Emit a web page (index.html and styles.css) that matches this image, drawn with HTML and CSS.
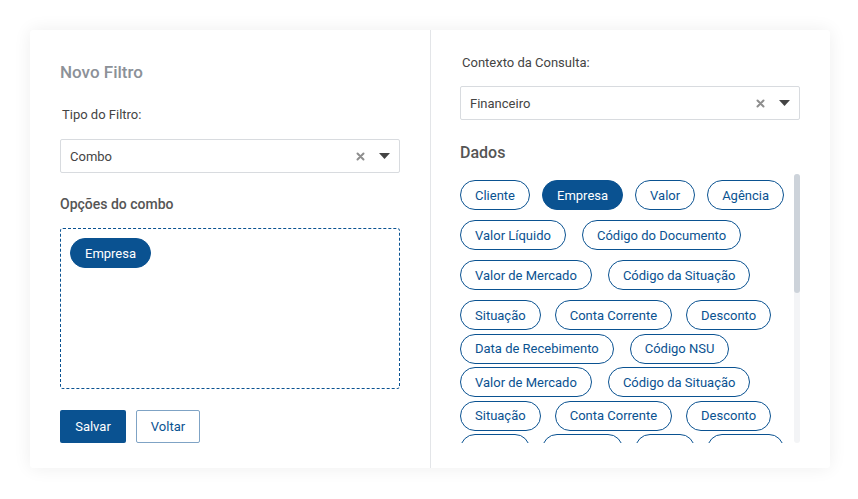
FILE: index.html
```html
<!DOCTYPE html>
<html lang="pt">
<head>
<meta charset="utf-8">
<title>Novo Filtro</title>
<link rel="stylesheet" href="styles.css">
</head>
<body>
<div class="card">
  <section class="panel left">
    <h2 class="title">Novo Filtro</h2>
    <label class="label">Tipo do Filtro:</label>
    <div class="select">
      <span class="select-value">Combo</span>
      <span class="select-icons">
        <svg class="clear" width="9" height="9" viewBox="0 0 9 9"><path d="M1.5 1.5 L7.5 7.5 M7.5 1.5 L1.5 7.5" stroke="#8e8e8e" stroke-width="2" stroke-linecap="round"/></svg>
        <svg class="caret" width="11" height="6" viewBox="0 0 11 6"><path d="M0 0 H11 L5.5 6 Z" fill="#444"/></svg>
      </span>
    </div>
    <h3 class="subtitle">Opções do combo</h3>
    <div class="dropzone">
      <span class="chip filled">Empresa</span>
    </div>
    <div class="actions">
      <button class="btn primary">Salvar</button>
      <button class="btn secondary">Voltar</button>
    </div>
  </section>
  <div class="divider"></div>
  <section class="panel right">
    <label class="label ctx">Contexto da Consulta:</label>
    <div class="select">
      <span class="select-value">Financeiro</span>
      <span class="select-icons">
        <svg class="clear" width="9" height="9" viewBox="0 0 9 9"><path d="M1.5 1.5 L7.5 7.5 M7.5 1.5 L1.5 7.5" stroke="#8e8e8e" stroke-width="2" stroke-linecap="round"/></svg>
        <svg class="caret" width="11" height="6" viewBox="0 0 11 6"><path d="M0 0 H11 L5.5 6 Z" fill="#444"/></svg>
      </span>
    </div>
    <h3 class="section">Dados</h3>
    <div class="chips-area">
      <div class="chips">
        <div class="row loose"><span class="chip">Cliente</span><span class="chip filled">Empresa</span><span class="chip">Valor</span><span class="chip">Agência</span></div>
        <div class="row loose wide"><span class="chip">Valor Líquido</span><span class="chip">Código do Documento</span></div>
        <div class="row loose wide"><span class="chip">Valor de Mercado</span><span class="chip">Código da Situação</span></div>
        <div class="row mid"><span class="chip">Situação</span><span class="chip">Conta Corrente</span><span class="chip">Desconto</span></div>
        <div class="row wide"><span class="chip">Data de Recebimento</span><span class="chip">Código NSU</span></div>
        <div class="row wide"><span class="chip">Valor de Mercado</span><span class="chip">Código da Situação</span></div>
        <div class="row mid"><span class="chip">Situação</span><span class="chip">Conta Corrente</span><span class="chip">Desconto</span></div>
        <div class="row"><span class="chip">Cliente</span><span class="chip">Empresa</span><span class="chip">Valor</span><span class="chip">Agência</span></div>
      </div>
      <div class="scrollbar"><div class="thumb"></div></div>
    </div>
  </section>
</div>
</body>
</html>
```

FILE: styles.css
```css
* { box-sizing: border-box; }
html, body { margin: 0; padding: 0; background: #ffffff; }
body {
  font-family: Roboto, "Noto Sans", Arial, sans-serif;
  color: #444;
  width: 858px;
  height: 499px;
  overflow: hidden;
}
.card {
  margin: 30px 0 0 30px;
  width: 800px;
  height: 438px;
  background: #fff;
  border-radius: 3px;
  box-shadow: 0 0 18px rgba(0, 0, 0, 0.07);
  display: flex;
}
.panel {
  display: flex;
  flex-direction: column;
  padding: 0 30px;
}
.left { width: 400px; padding-top: 32px; }
.right { width: 399px; padding: 25px 30px 0 29px; }
.divider { width: 1px; background: #e3e5e8; }

.title {
  margin: 0;
  font-size: 17px;
  line-height: 20px;
  font-weight: 500;
  color: #8c9198;
}
.label {
  display: block;
  font-size: 13px;
  line-height: 16px;
  color: #444;
  padding-left: 2px;
  margin-top: 25px;
}
.label.ctx { margin-top: 0; }
.select {
  margin-top: 16px;
  height: 34px;
  border: 1px solid #d8dbdf;
  border-radius: 2px;
  display: flex;
  align-items: center;
  justify-content: space-between;
  padding: 0 9px 0 9px;
}
.right .select { margin-top: 15px; }
.select-value { font-size: 13px; color: #444; }
.select-icons { display: flex; align-items: center; gap: 14px; }
.clear { display: block; }
.caret { display: block; }

.subtitle {
  margin: 22px 0 0;
  font-size: 14px;
  line-height: 18px;
  font-weight: 500;
  color: #555;
}
.dropzone {
  margin-top: 15px;
  height: 161px;
  border: 1px dashed #0a5291;
  border-radius: 3px;
  padding: 9px;
  display: flex;
  align-items: flex-start;
}
.actions {
  margin-top: 21px;
  display: flex;
  gap: 10px;
}
.btn {
  height: 33px;
  border-radius: 2px;
  font-family: inherit;
  font-size: 13px;
  padding: 0;
  cursor: pointer;
}
.btn.primary {
  width: 66px;
  background: #0a5291;
  color: #fff;
  border: none;
}
.btn.secondary {
  width: 64px;
  background: #fff;
  color: #0a5291;
  border: 1px solid #7fa3c5;
}

.section {
  margin: 23px 0 0;
  font-size: 16px;
  line-height: 20px;
  font-weight: 500;
  color: #555;
}
.chips-area {
  margin-top: 11px;
  height: 269px;
  display: flex;
}
.chips {
  flex: 1;
  overflow: hidden;
  padding-top: 6px;
  display: flex;
  flex-direction: column;
}
.scrollbar {
  width: 6px;
  background: #f3f4f6;
  border-radius: 3px;
  flex: none;
}
.thumb {
  height: 119px;
  background: #cdd3da;
  border-radius: 3px;
}
.row {
  display: flex;
  gap: 12px;
  margin-bottom: 3.5px;
  flex: none;
}
.row.wide { gap: 16px; }
.row.mid { gap: 14px; }
.row.loose { margin-bottom: 10px; }
.chip {
  display: inline-flex;
  align-items: center;
  justify-content: center;
  height: 30px;
  padding: 0 14px;
  border: 1px solid #0a5291;
  border-radius: 15px;
  color: #0a5291;
  font-size: 13px;
  white-space: nowrap;
  background: #fff;
}
.chip.filled { background: #0a5291; color: #fff; }
```
